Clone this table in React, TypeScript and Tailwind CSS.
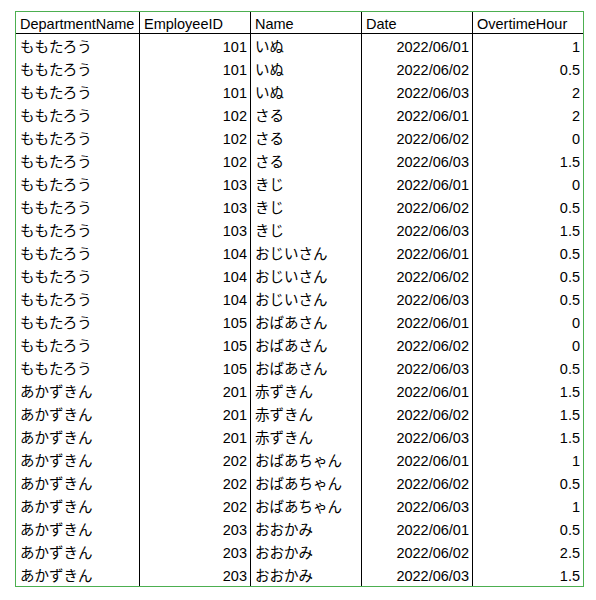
import React from "react";

type Row = {
  dept: string;
  id: number;
  name: string;
  date: string;
  hours: string;
};

const rows: Row[] = [
  { dept: "ももたろう", id: 101, name: "いぬ", date: "2022/06/01", hours: "1" },
  { dept: "ももたろう", id: 101, name: "いぬ", date: "2022/06/02", hours: "0.5" },
  { dept: "ももたろう", id: 101, name: "いぬ", date: "2022/06/03", hours: "2" },
  { dept: "ももたろう", id: 102, name: "さる", date: "2022/06/01", hours: "2" },
  { dept: "ももたろう", id: 102, name: "さる", date: "2022/06/02", hours: "0" },
  { dept: "ももたろう", id: 102, name: "さる", date: "2022/06/03", hours: "1.5" },
  { dept: "ももたろう", id: 103, name: "きじ", date: "2022/06/01", hours: "0" },
  { dept: "ももたろう", id: 103, name: "きじ", date: "2022/06/02", hours: "0.5" },
  { dept: "ももたろう", id: 103, name: "きじ", date: "2022/06/03", hours: "1.5" },
  { dept: "ももたろう", id: 104, name: "おじいさん", date: "2022/06/01", hours: "0.5" },
  { dept: "ももたろう", id: 104, name: "おじいさん", date: "2022/06/02", hours: "0.5" },
  { dept: "ももたろう", id: 104, name: "おじいさん", date: "2022/06/03", hours: "0.5" },
  { dept: "ももたろう", id: 105, name: "おばあさん", date: "2022/06/01", hours: "0" },
  { dept: "ももたろう", id: 105, name: "おばあさん", date: "2022/06/02", hours: "0" },
  { dept: "ももたろう", id: 105, name: "おばあさん", date: "2022/06/03", hours: "0.5" },
  { dept: "あかずきん", id: 201, name: "赤ずきん", date: "2022/06/01", hours: "1.5" },
  { dept: "あかずきん", id: 201, name: "赤ずきん", date: "2022/06/02", hours: "1.5" },
  { dept: "あかずきん", id: 201, name: "赤ずきん", date: "2022/06/03", hours: "1.5" },
  { dept: "あかずきん", id: 202, name: "おばあちゃん", date: "2022/06/01", hours: "1" },
  { dept: "あかずきん", id: 202, name: "おばあちゃん", date: "2022/06/02", hours: "0.5" },
  { dept: "あかずきん", id: 202, name: "おばあちゃん", date: "2022/06/03", hours: "1" },
  { dept: "あかずきん", id: 203, name: "おおかみ", date: "2022/06/01", hours: "0.5" },
  { dept: "あかずきん", id: 203, name: "おおかみ", date: "2022/06/02", hours: "2.5" },
  { dept: "あかずきん", id: 203, name: "おおかみ", date: "2022/06/03", hours: "1.5" },
];

const cols = "grid grid-cols-[123px_111px_111px_111px_111px]";
const cell = "flex items-center pl-[4px] pr-[3px] pt-[3px] whitespace-nowrap overflow-hidden";

const App: React.FC = () => {
  return (
    <div
      className="bg-white min-h-[600px] pt-[11px] pl-[15px] text-black text-[14.5px] leading-none"
      style={{ fontFamily: '"Liberation Sans", "Noto Sans CJK JP", sans-serif' }}
    >
      <div className="w-[569px] border border-[#4caf50]">
        <div className={`${cols} h-[22px] border-b border-black`}>
          <div className={cell}>DepartmentName</div>
          <div className={`${cell} border-l border-black`}>EmployeeID</div>
          <div className={`${cell} border-l border-black`}>Name</div>
          <div className={`${cell} border-l border-black`}>Date</div>
          <div className={`${cell} border-l border-black`}>OvertimeHour</div>
        </div>

        {rows.map((r, i) => (
          <div key={i} className={`${cols} h-[23px]`}>
            <div className={cell}>{r.dept}</div>
            <div className={`${cell} border-l border-black justify-end`}>
              {r.id}
            </div>
            <div className={`${cell} border-l border-black`}>{r.name}</div>
            <div className={`${cell} border-l border-black justify-end`}>
              {r.date}
            </div>
            <div className={`${cell} border-l border-black justify-end`}>
              {r.hours}
            </div>
          </div>
        ))}
      </div>
    </div>
  );
};

export default App;
